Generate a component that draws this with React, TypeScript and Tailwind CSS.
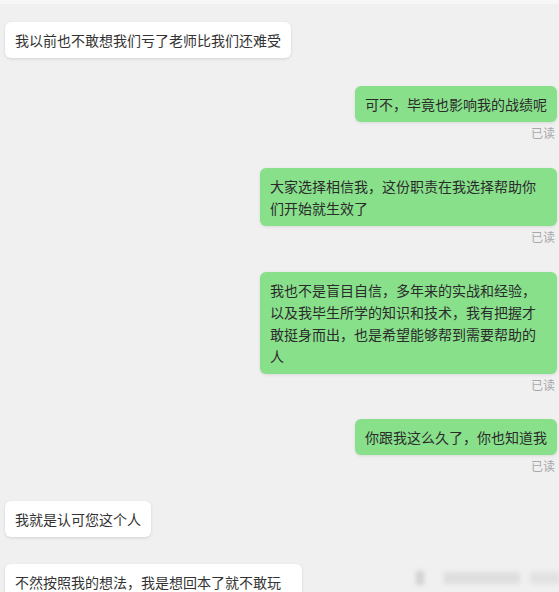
import React from "react";

const font = { fontFamily: '"Microsoft YaHei", "Noto Sans CJK SC", "Noto Sans", sans-serif' };

function Left({ text, className = "" }: { text: string; className?: string }) {
  return (
    <div className={"flex justify-start pl-[5px] " + className}>
      <div className="max-w-[297px] rounded-[6px] bg-white px-[10px] py-[7px] text-[14px] leading-[22px] text-[#333333] shadow-[0_1px_3px_rgba(0,0,0,0.12)]">
        {text}
      </div>
    </div>
  );
}

function Right({ text, className = "" }: { text: string; className?: string }) {
  return (
    <div className={"flex flex-col items-end pr-[2px] " + className}>
      <div className="max-w-[297px] rounded-[6px] bg-[#88e08b] px-[10px] py-[7px] text-[14px] leading-[22px] text-[#2b2b2b] shadow-[0_1px_3px_rgba(0,0,0,0.10)]">
        {text}
      </div>
      <div className="mt-[3px] pr-[2px] text-[12px] leading-[16px] text-[#a8a8a8]">已读</div>
    </div>
  );
}

export default function App() {
  return (
    <div className="relative h-[592px] w-[559px] overflow-hidden bg-[#f0f0f0]" style={font}>
      <div className="h-[4px] bg-[#f7f7f7]" />
      <Left className="mt-[18px]" text="我以前也不敢想我们亏了老师比我们还难受" />
      <Right className="mt-[28px]" text="可不，毕竟也影响我的战绩呢" />
      <Right className="mt-[27px]" text="大家选择相信我，这份职责在我选择帮助你们开始就生效了" />
      <Right className="mt-[27px]" text="我也不是盲目自信，多年来的实战和经验，以及我毕生所学的知识和技术，我有把握才敢挺身而出，也是希望能够帮到需要帮助的人" />
      <Right className="mt-[26px]" text="你跟我这么久了，你也知道我" />
      <Left className="mt-[27px]" text="我就是认可您这个人" />
      <Left className="mt-[27px]" text="不然按照我的想法，我是想回本了就不敢玩了" />
      <div className="absolute left-[416px] top-[571px] flex items-center gap-[6px] blur-[2px]">
        <div className="h-[14px] w-[8px] bg-[#d2d2d2]" />
        <div className="ml-[14px] h-[12px] w-[76px] bg-[#dedede]" />
        <div className="ml-[4px] h-[12px] w-[30px] bg-[#e2e2e2]" />
      </div>
    </div>
  );
}
